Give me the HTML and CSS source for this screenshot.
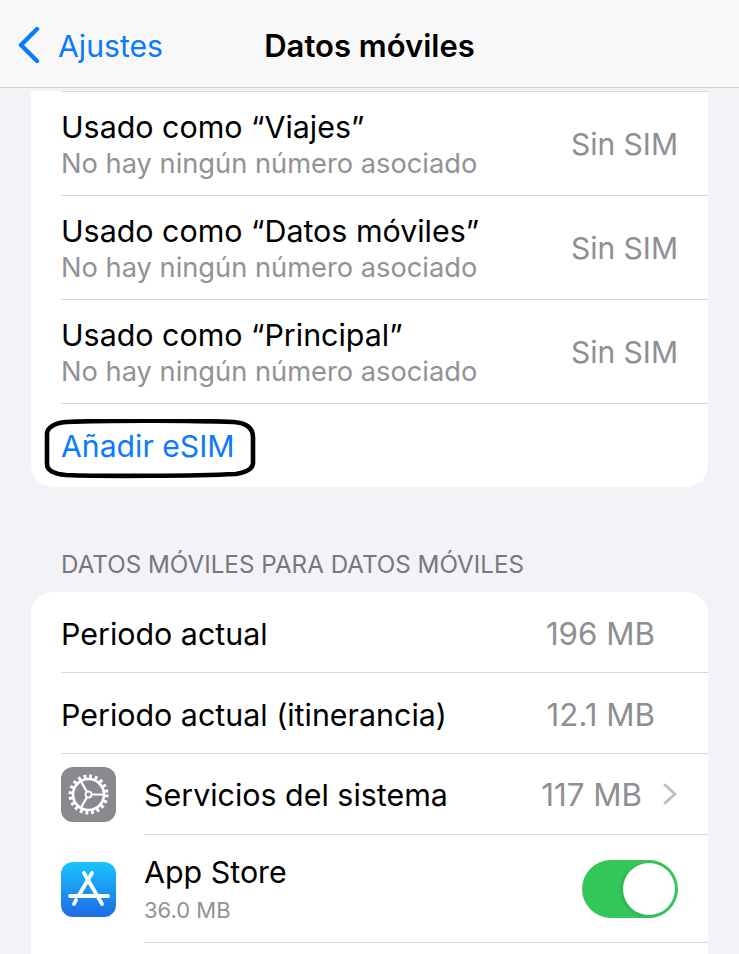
FILE: index.html
```html
<!DOCTYPE html>
<html lang="es">
<head>
<meta charset="utf-8">
<title>Datos móviles</title>
<link rel="stylesheet" href="styles.css">
</head>
<body>
<header class="nav">
  <a class="back">
    <svg class="back-icon" width="24" height="38" viewBox="0 0 24 38"><path d="M20 3 L4 19 L20 35" fill="none" stroke="#0a7aff" stroke-width="4.4" stroke-linecap="round" stroke-linejoin="round"/></svg>
    <span>Ajustes</span>
  </a>
  <h1 class="nav-title">Datos móviles</h1>
</header>
<main class="content">
  <section class="card card-sims">
    <div class="sim-row">
      <div class="sim-text"><div class="label">Usado como “Viajes”</div><div class="sub">No hay ningún número asociado</div></div>
      <div class="value">Sin SIM</div>
    </div>
    <div class="sim-row">
      <div class="sim-text"><div class="label">Usado como “Datos móviles”</div><div class="sub">No hay ningún número asociado</div></div>
      <div class="value">Sin SIM</div>
    </div>
    <div class="sim-row">
      <div class="sim-text"><div class="label">Usado como “Principal”</div><div class="sub">No hay ningún número asociado</div></div>
      <div class="value">Sin SIM</div>
    </div>
    <div class="add-row">
      <span class="add-link">Añadir eSIM</span>
      <svg class="oval" width="216" height="62" viewBox="0 0 216 62"><path d="M22 3 C70 1 150 1.5 190 3 C202 4 209 9 209 18 L209 44 C209 50 203 53 192 55 C150 57 60 57.5 22 56 C10 55 3 52 3 45 L3 15 C3 9 10 4 22 3 Z" fill="none" stroke="#000" stroke-width="4.6"/></svg>
    </div>
  </section>

  <h2 class="section-title">DATOS MÓVILES PARA DATOS MÓVILES</h2>

  <section class="card card-usage">
    <div class="row row-plain"><span class="label">Periodo actual</span><span class="value value-usage">196 MB</span></div>
    <div class="row row-plain"><span class="label">Periodo actual (itinerancia)</span><span class="value value-usage">12.1 MB</span></div>
    <div class="row row-app">
      <svg class="app-icon" width="55" height="55" viewBox="0 0 55 55">
        <rect width="55" height="55" rx="12" fill="#8a8a8e"/>
        <g fill="none" stroke="#fff">
          <circle cx="27.5" cy="27.5" r="15.5" stroke-width="2.6"/>
          <circle cx="27.5" cy="27.5" r="18" stroke-width="4" stroke-dasharray="2.9 2.76"/>
          <circle cx="27.5" cy="27.5" r="3" stroke-width="1.8"/>
          <path d="M30.5 27.5 H42 M26 24.9 L20 14.5 M26 30.1 L20 40.5" stroke-width="2.2"/>
        </g>
      </svg>
      <div class="app-main">
        <span class="label">Servicios del sistema</span>
        <span class="value value-usage">117 MB</span>
        <svg class="chevron" width="16" height="24" viewBox="0 0 16 24"><path d="M3 3 L13 12 L3 21" fill="none" stroke="#c0c0c4" stroke-width="3" stroke-linecap="round" stroke-linejoin="round"/></svg>
      </div>
    </div>
    <div class="row row-app row-tall">
      <svg class="app-icon" width="55" height="55" viewBox="0 0 55 55">
        <defs><linearGradient id="store" x1="0" y1="0" x2="0" y2="1"><stop offset="0" stop-color="#1ac4fb"/><stop offset="1" stop-color="#1d6ae5"/></linearGradient></defs>
        <rect width="55" height="55" rx="12" fill="url(#store)"/>
        <path d="M31 11 L18 33 M23 11 L41 42 M9 34 H47 M15 38 L13 42" fill="none" stroke="#fff" stroke-width="3.8" stroke-linecap="round"/>
      </svg>
      <div class="app-main">
        <div class="sim-text"><div class="label">App Store</div><div class="sub sub-small">36.0 MB</div></div>
        <div class="switch"><div class="knob"></div></div>
      </div>
    </div>
  </section>
</main>
</body>
</html>
```

FILE: styles.css
```css
* { box-sizing: border-box; }
html, body { margin: 0; height: 954px; overflow: hidden; }
body {
  background: #f2f2f7;
  color: #000;
  font-family: Inter, "Liberation Sans", sans-serif;
  font-size: 30px;
}
.nav {
  position: relative;
  height: 88px;
  display: flex;
  align-items: center;
  justify-content: center;
  background: #f8f8f8;
  border-bottom: 1px solid #d3d3d6;
}
.back {
  position: absolute;
  left: 17px;
  top: 25px;
  display: flex;
  align-items: center;
  gap: 17px;
  color: #0a7aff;
  font-size: 30.2px;
  line-height: 38px;
}
.back span { padding-top: 2px; }
.back-icon { flex: none; }
.nav-title {
  margin: 0;
  font-size: 31px;
  font-weight: 600;
  line-height: 38px;
  padding-top: 4px;
}
.content { padding: 3px 31px 0; }
.card {
  background: #fff;
  overflow: hidden;
}
.card-sims {
  border-radius: 0 0 22px 22px;
  height: 396px;
}
.sim-row {
  height: 104px;
  margin-left: 30px;
  padding-right: 30px;
  display: flex;
  align-items: center;
  justify-content: space-between;
  border-top: 1px solid #d9d9dc;
}
.sim-row .sim-text { padding-top: 2px; }
.label { font-size: 30.4px; line-height: 38px; white-space: nowrap; }
.sub { font-size: 27.25px; line-height: 34px; margin-top: 1px; color: #929296; white-space: nowrap; }
.sub-small { font-size: 22px; line-height: 30px; margin-top: 4px; }
.value { font-size: 30px; color: #8e8e93; white-space: nowrap; }
.value-usage { font-size: 31.3px; }
.add-row {
  position: relative;
  height: 84px;
  margin-left: 30px;
  padding-top: 23px;
  border-top: 1px solid #d9d9dc;
}
.add-link { color: #0a7aff; font-size: 30.2px; line-height: 38px; }
.oval {
  position: absolute;
  left: -17px;
  top: 15px;
}
.section-title {
  margin: 63px 0 12px 30px;
  font-size: 24.2px;
  line-height: 30px;
  font-weight: 400;
  color: #77777c;
  white-space: nowrap;
}
.card-usage { border-radius: 22px 22px 0 0; height: 400px; }
.row { display: flex; align-items: center; }
.row-plain {
  height: 81px;
  margin-left: 30px;
  padding-right: 53px;
  padding-top: 3px;
  justify-content: space-between;
  border-bottom: 1px solid #d9d9dc;
}
.row-app { height: 81px; padding-left: 30px; }
.row-tall { height: 108px; }
.app-icon { flex: none; }
.app-main {
  flex: 1;
  align-self: stretch;
  margin-left: 28px;
  padding-right: 30px;
  display: flex;
  align-items: center;
  border-bottom: 1px solid #d9d9dc;
}
.app-main > .label { flex: 1; padding-top: 2px; }
.app-main > .value { padding-top: 2px; }
.app-main .sim-text { flex: 1; }
.chevron { margin-left: 20px; flex: none; }
.switch {
  width: 96px;
  height: 58px;
  border-radius: 29px;
  background: #34c759;
  padding: 3px;
  display: flex;
  justify-content: flex-end;
}
.knob {
  width: 52px;
  height: 52px;
  border-radius: 50%;
  background: #fff;
  box-shadow: -2px 1px 4px rgba(0, 0, 0, 0.12);
}
```
